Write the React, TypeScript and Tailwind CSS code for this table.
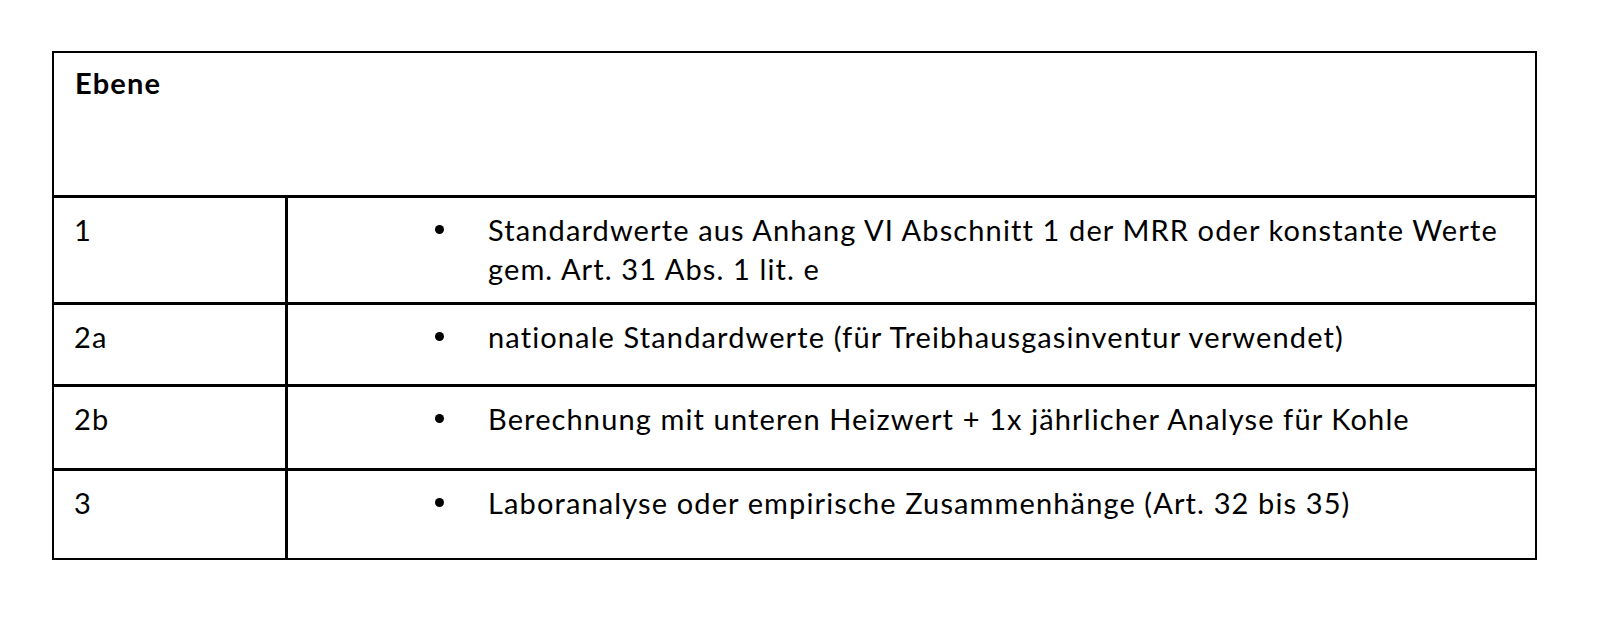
export default function App() {
  const rows = [
    {
      n: "1",
      h: "h-[107px]",
      lines: [
        "Standardwerte aus Anhang VI Abschnitt 1 der MRR oder konstante Werte",
        "gem. Art. 31 Abs. 1 lit. e",
      ],
    },
    { n: "2a", h: "h-[82px]", lines: ["nationale Standardwerte (für Treibhausgasinventur verwendet)"] },
    { n: "2b", h: "h-[84px]", lines: ["Berechnung mit unteren Heizwert + 1x jährlicher Analyse für Kohle"] },
    { n: "3", h: "h-[90px]", lines: ["Laboranalyse oder empirische Zusammenhänge (Art. 32 bis 35)"] },
  ];
  return (
    <div className="min-h-[617px] w-[1608px] bg-white pt-[51px] pl-[52px] font-['Lato',sans-serif] text-[29px] leading-[39px] tracking-[1.12px] text-black">
      <div className="w-[1485px] border-2 border-black">
        <div className="h-[142px] pl-[21px] pt-[10px] font-bold">Ebene</div>
        {rows.map((r) => (
          <div key={r.n} className={`flex border-t-[3px] border-black ${r.h}`}>
            <div className="w-[234px] shrink-0 border-r-[3px] border-black pl-[20px] pt-[12px]">{r.n}</div>
            <div className="flex pt-[12px]">
              <div className="w-[200px] shrink-0">
                <div className="ml-[147px] mt-[15px] h-[9px] w-[9px] rounded-full bg-black" />
              </div>
              <div className="whitespace-nowrap">
                {r.lines.map((l, i) => (
                  <div key={i}>{l}</div>
                ))}
              </div>
            </div>
          </div>
        ))}
      </div>
    </div>
  );
}
